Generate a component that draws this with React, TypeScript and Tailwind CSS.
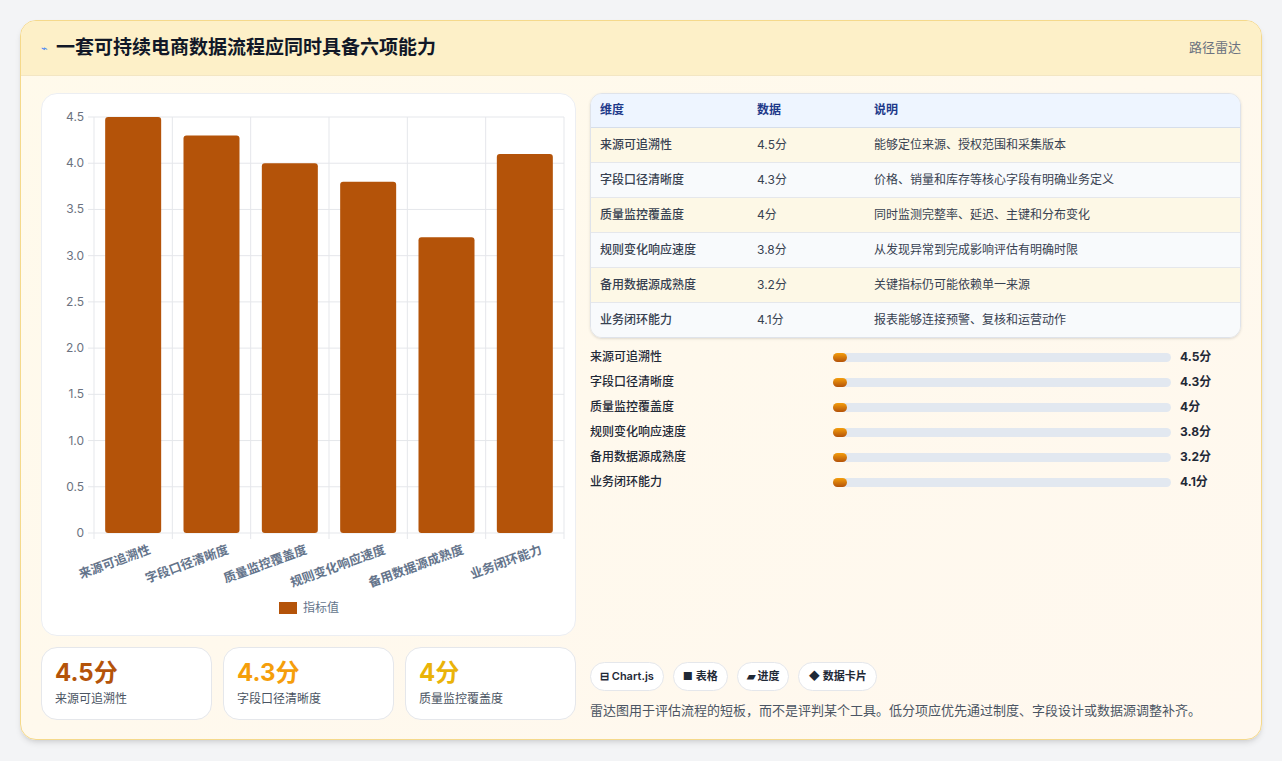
const rows = [
  { name: '来源可追溯性', v: 4.5, desc: '能够定位来源、授权范围和采集版本' },
  { name: '字段口径清晰度', v: 4.3, desc: '价格、销量和库存等核心字段有明确业务定义' },
  { name: '质量监控覆盖度', v: 4, desc: '同时监测完整率、延迟、主键和分布变化' },
  { name: '规则变化响应速度', v: 3.8, desc: '从发现异常到完成影响评估有明确时限' },
  { name: '备用数据源成熟度', v: 3.2, desc: '关键指标仍可能依赖单一来源' },
  { name: '业务闭环能力', v: 4.1, desc: '报表能够连接预警、复核和运营动作' },
]

function Chart() {
  // plot area in svg coords
  const x0 = 52, x1 = 522, y0 = 23, y1 = 439
  const step = (x1 - x0) / 6
  const ticks = [0, 0.5, 1, 1.5, 2, 2.5, 3, 3.5, 4, 4.5]
  const y = (v: number) => y1 - (v / 4.5) * (y1 - y0)
  return (
    <svg width="535" height="543" className="block" style={{ fontFamily: 'Inter, "Noto Sans CJK SC", sans-serif' }}>
      {ticks.map(t => (
        <g key={t}>
          <line x1={x0 - 6} x2={x1} y1={y(t)} y2={y(t)} stroke="#e5e7eb" />
          <text x={x0 - 10} y={y(t) + 4} textAnchor="end" fontSize="12" fill="#6b7280">{t === 0 ? '0' : t.toFixed(1)}</text>
        </g>
      ))}
      {Array.from({ length: 7 }).map((_, i) => (
        <line key={i} x1={x0 + i * step} x2={x0 + i * step} y1={y0} y2={y1 + 6} stroke="#e5e7eb" />
      ))}
      {rows.map((r, i) => {
        const cx = x0 + step * i + step / 2
        return (
          <g key={r.name}>
            <rect x={cx - 28} y={y(r.v)} width="56" height={y1 - y(r.v)} rx="3" fill="#b45309" />
            <text x={cx + 18} y={y1 + 20} textAnchor="end" fontSize="12.5" fontWeight="600" fill="#64748b" transform={`rotate(-20 ${cx + 18} ${y1 + 20})`}>{r.name}</text>
          </g>
        )
      })}
      <rect x="237" y="508" width="18" height="12" fill="#b45309" />
      <text x="261" y="518" fontSize="12" fill="#64748b">指标值</text>
    </svg>
  )
}

export default function App() {
  return (
    <div className="min-h-screen bg-[#f3f4f6] p-5" style={{ fontFamily: 'Inter, "Noto Sans CJK SC", sans-serif' }}>
      <div className="rounded-2xl border border-[#f5d98b] bg-gradient-to-br from-[#fffaeb] to-[#fff8ef] shadow-md overflow-hidden">
        <div className="flex items-center justify-between h-[55px] px-5 bg-[#fdf0c8] border-b border-[#f3e6c3]">
          <div className="flex items-center gap-2">
            <span className="text-[11px] text-[#3b82f6]">⌁</span>
            <h1 className="text-[19px] font-bold text-[#111827]">一套可持续电商数据流程应同时具备六项能力</h1>
          </div>
          <span className="text-[13px] text-[#6b7280]">路径雷达</span>
        </div>
        <div className="flex gap-[14px] px-5 pt-[17px] pb-[19px]">
          <div className="w-[535px] flex flex-col gap-[11px]">
            <div className="h-[543px] rounded-2xl border border-[#eceef2] bg-white overflow-hidden">
              <Chart />
            </div>
            <div className="grid grid-cols-3 gap-[11px]">
              {[['4.5分', '来源可追溯性', 'text-[#b45309]'], ['4.3分', '字段口径清晰度', 'text-[#f59e0b]'], ['4分', '质量监控覆盖度', 'text-[#eab308]']].map(([v, l, c]) => (
                <div key={l} className="h-[73px] rounded-2xl border border-[#e5e7eb] bg-white px-[13px] pt-[10px]">
                  <div className={`text-[24px] font-bold leading-tight ${c}`}>{v}</div>
                  <div className="text-[12px] text-[#4b5563] mt-[2px]">{l}</div>
                </div>
              ))}
            </div>
          </div>
          <div className="flex-1 flex flex-col">
            <div className="rounded-xl border border-[#dfe3ea] overflow-hidden shadow-sm">
              <table className="w-full text-[12px] text-[#374151]">
                <thead>
                  <tr className="bg-[#eef5ff] text-[#1e3a8a] font-semibold h-[33px] border-b border-[#d6deea]">
                    <th className="text-left font-semibold pl-[9px] w-[166px]">维度</th>
                    <th className="text-left font-semibold w-[117px]">数据</th>
                    <th className="text-left font-semibold">说明</th>
                  </tr>
                </thead>
                <tbody>
                  {rows.map((r, i) => (
                    <tr key={r.name} className={`h-[35px] border-b border-[#e5e7eb] last:border-b-0 ${i % 2 ? 'bg-[#f8fafc]' : 'bg-[#fdf8e6]'}`}>
                      <td className="pl-[9px] font-medium">{r.name}</td>
                      <td>{r.v}分</td>
                      <td>{r.desc}</td>
                    </tr>
                  ))}
                </tbody>
              </table>
            </div>
            <div className="flex flex-col gap-[7px] mt-[10px]">
              {rows.map(r => (
                <div key={r.name} className="flex items-center h-[18px] text-[12px] text-[#1f2937]">
                  <span className="w-[243px] font-medium">{r.name}</span>
                  <div className="w-[338px] h-[9px] rounded-full bg-[#e2e8f0] relative">
                    <div className="absolute left-0 top-0 h-[9px] w-[14px] rounded-full bg-gradient-to-b from-[#f59e0b] to-[#b45309]" />
                  </div>
                  <span className="ml-[9px] font-bold">{r.v}分</span>
                </div>
              ))}
            </div>
            <div className="flex-1" />
            <div className="flex gap-[9px] text-[11px] font-semibold text-[#1f2937]">
              {['⊟ Chart.js', '■ 表格', '▰ 进度', '◆ 数据卡片'].map(t => (
                <span key={t} className="h-[29px] px-[9px] flex items-center rounded-full border border-[#e5e7eb] bg-white">{t}</span>
              ))}
            </div>
            <p className="mt-[10px] text-[13px] text-[#4b5563]">雷达图用于评估流程的短板，而不是评判某个工具。低分项应优先通过制度、字段设计或数据源调整补齐。</p>
          </div>
        </div>
      </div>
    </div>
  )
}
